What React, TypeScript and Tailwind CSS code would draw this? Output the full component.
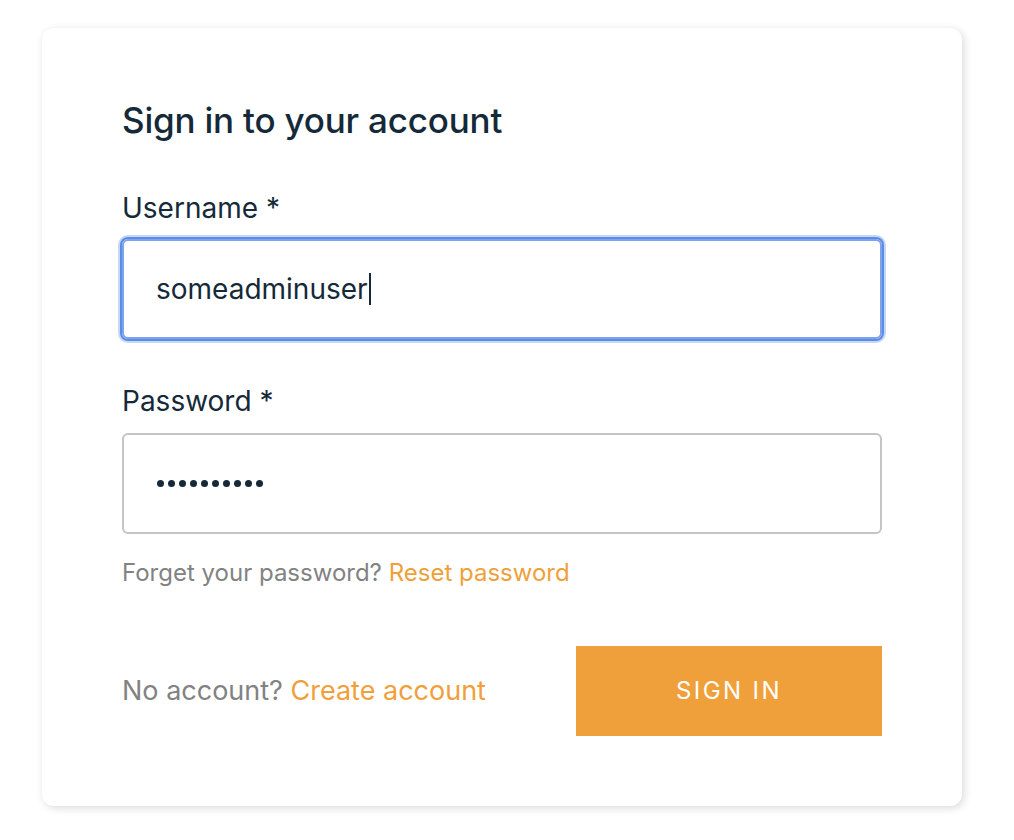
import { useState } from "react";

const FONT = { fontFamily: "Inter, 'Noto Sans', 'Liberation Sans', sans-serif" };

export default function App() {
  const [username] = useState("someadminuser");

  return (
    <div className="min-h-[840px] w-full bg-white pt-[28px]" style={FONT}>
      <div className="ml-[42px] w-[920px] rounded-[12px] bg-white px-[80px] pt-[68px] pb-[70px] shadow-[2px_2px_8px_0_rgba(0,0,0,0.15)]">
        <h1 className="text-[35px] leading-[48px] font-medium tracking-[-0.2px] text-[#152939]">
          Sign in to your account
        </h1>

        <div className="mt-[47px]">
          <label className="block text-[28px] leading-[34px] text-[#152939]">
            Username *
          </label>
          <div className="mt-[14px] flex h-[100px] items-center rounded-[6px] border-2 border-[#7ea2ec] px-[32px] shadow-[0_0_0_2px_#5b8ce6,0_0_0_4px_rgba(91,140,230,0.35)]">
            <span className="text-[28px] text-[#152939]">{username}</span>
            <span className="ml-[1px] h-[32px] w-[2px] bg-[#152939]" />
          </div>
        </div>

        <div className="mt-[45px]">
          <label className="block text-[28px] leading-[34px] text-[#152939]">
            Password *
          </label>
          <div className="mt-[15px] flex h-[101px] items-center gap-[4px] rounded-[6px] border-2 border-[#c4c4c4] px-[33px]">
            {Array.from({ length: 10 }).map((_, i) => (
              <span key={i} className="size-[7px] rounded-full bg-[#152939]" />
            ))}
          </div>
          <p className="mt-[24px] text-[24px] leading-[30px] text-[#828282]">
            Forget your password?{" "}
            <a className="text-[#f0a03a]">Reset password</a>
          </p>
        </div>

        <div className="mt-[58px] flex items-center justify-between">
          <p className="text-[27px] text-[#828282]">
            No account? <a className="text-[#f0a03a]">Create account</a>
          </p>
          <button className="h-[90px] w-[306px] bg-[#f0a03a] text-[24px] tracking-[2.4px] text-white">
            SIGN IN
          </button>
        </div>
      </div>
    </div>
  );
}
